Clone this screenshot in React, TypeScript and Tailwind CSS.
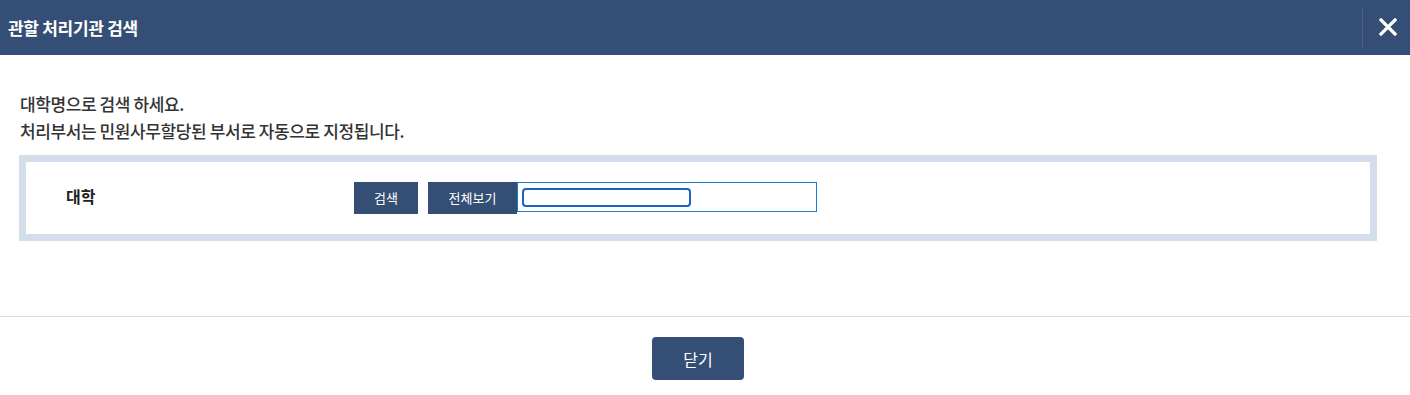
export default function App() {
  const font = { fontFamily: '"Noto Sans CJK KR", "Noto Sans", sans-serif' };
  return (
    <div className="w-[1410px] h-[395px] bg-white flex flex-col" style={font}>
      <div className="h-[55px] bg-[#354e75] flex items-center justify-between shrink-0">
        <h1 className="pl-2 text-white text-[17px] font-bold tracking-[-0.3px]">관할 처리기관 검색</h1>
        <div className="h-[40px] flex items-center border-l border-[#4a6289] w-[48px] justify-center mb-[1px]">
          <svg width="18" height="18" viewBox="0 0 18 18" className="ml-[2px]">
            <path d="M2 2 L16 16 M16 2 L2 16" stroke="white" strokeWidth="3.2" strokeLinecap="square" />
          </svg>
        </div>
      </div>
      <div className="flex-1 flex flex-col px-[19px] pt-[35px]">
        <div className="text-[17px] text-[#333] font-medium leading-[27px] pl-[1px] tracking-[-0.4px]">
          <p>대학명으로 검색 하세요.</p>
          <p>처리부서는 민원사무할당된 부서로 자동으로 지정됩니다.</p>
        </div>
        <div className="mt-[11px] w-[1358px] h-[86px] border-[7px] border-[#d4deeb] flex items-start pt-[20px]">
          <div className="w-[328px] pl-[40px] pt-[6px] text-[16px] font-bold text-[#222] leading-none">대학</div>
          <button className="w-[64px] h-[32px] bg-[#354e75] text-white text-[13px]">검색</button>
          <button className="ml-[10px] w-[89px] h-[32px] bg-[#354e75] text-white text-[13px]">전체보기</button>
          <div className="w-[300px] h-[30px] border border-[#1a7ccc] flex items-center pl-[4px]">
            <div className="w-[169px] h-[19px] border-2 border-[#1f60c0] rounded-[4px]"></div>
          </div>
        </div>
      </div>
      <div className="h-[79px] border-t border-[#d9d9d9] flex justify-center pt-[20px] pr-[14px] shrink-0">
        <button className="w-[92px] h-[43px] bg-[#354e75] text-white text-[16px] rounded-[4px]">닫기</button>
      </div>
    </div>
  );
}
